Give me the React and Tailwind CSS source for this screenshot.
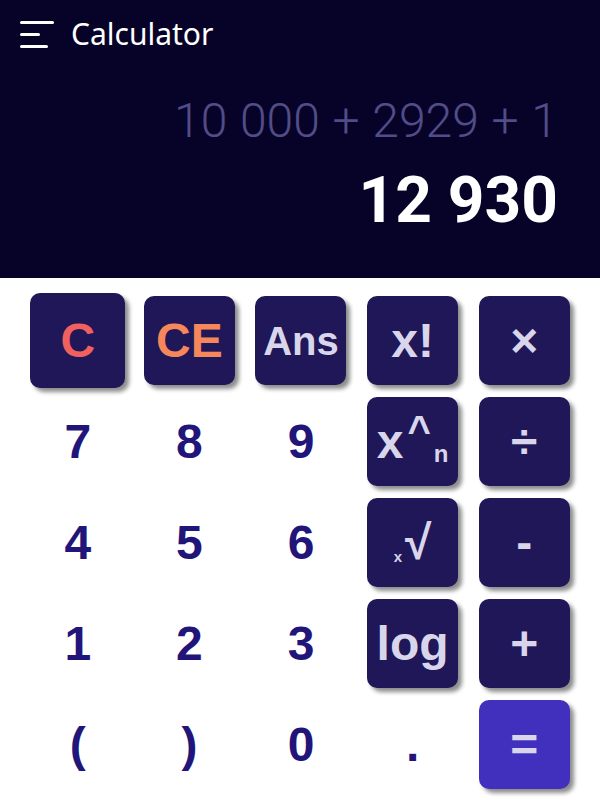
import React from "react";

const KEYS = [
  { label: "C", kind: "fn", text: "text-[#f0605e]", big: true },
  { label: "CE", kind: "fn", text: "text-[#f6875b]" },
  { label: "Ans", kind: "fn", small: true },
  { label: "x!", kind: "fn" },
  { label: "×", kind: "fn" },
  { label: "7" },
  { label: "8" },
  { label: "9" },
  { label: "pow", kind: "fn" },
  { label: "÷", kind: "fn" },
  { label: "4" },
  { label: "5" },
  { label: "6" },
  { label: "root", kind: "fn" },
  { label: "-", kind: "fn" },
  { label: "1" },
  { label: "2" },
  { label: "3" },
  { label: "log", kind: "fn" },
  { label: "+", kind: "fn" },
  { label: "(" },
  { label: ")" },
  { label: "0" },
  { label: "." },
  { label: "=", kind: "eq" },
];

const renderLabel = (label) => {
  if (label === "pow")
    return (
      <span className="flex items-end">
        <span>x</span>
        <span className="relative -top-[16px] ml-[4px] text-[40px]">^</span>
        <span className="text-[24px] ml-[3px]">n</span>
      </span>
    );
  if (label === "root")
    return (
      <span className="flex items-end">
        <span className="text-[15px] mr-[3px] leading-[1.4]">x</span>
        <span>√</span>
      </span>
    );
  return label;
};

const Key = ({ k }) => {
  if (!k.kind) {
    return (
      <div className="flex items-center justify-center text-[#22157a] text-[48px] font-bold leading-none">
        {k.label}
      </div>
    );
  }
  const bg = k.kind === "eq" ? "bg-[#4130bd]" : "bg-[#1f1757]";
  const size = k.big ? "w-[95px] h-[95px]" : "w-[91px] h-[89px]";
  return (
    <div className="flex items-center justify-center">
      <button
        className={`${size} ${bg} rounded-[10px] shadow-[4px_4px_4px_rgba(0,0,0,0.45)] flex items-center justify-center font-bold leading-none ${
          k.small ? "text-[40px]" : "text-[48px]"
        } ${k.text || "text-[#d9d5ea]"}`}
      >
        {renderLabel(k.label)}
      </button>
    </div>
  );
};

export default function App() {
  return (
    <div className="w-[600px] h-[800px] bg-white overflow-hidden">
      <header className="h-[278px] bg-[#070328] flex flex-col">
        <div className="flex items-center h-[40px] mt-[14px] pl-[20px]">
          <div className="flex flex-col gap-[9px]">
            <span className="block w-[34px] h-[3px] rounded-full bg-white" />
            <span className="block w-[20px] h-[3px] rounded-full bg-white" />
            <span className="block w-[28px] h-[3px] rounded-full bg-white" />
          </div>
          <h1 className="ml-[17px] text-white text-[30px] font-['Noto_Sans',sans-serif] leading-none">
            Calculator
          </h1>
        </div>
        <div className="flex flex-col items-end pr-[42px] font-['Roboto',sans-serif]">
          <div className="mt-[43px] text-[48px] font-light text-[#524c88] leading-none [word-spacing:1px]">
            10 000 + 2929 + 1
          </div>
          <div className="mt-[24px] text-[64px] font-bold text-white leading-none">
            12 930
          </div>
        </div>
      </header>
      <main className="grid grid-cols-5 auto-rows-[101px] pl-[22px] pr-[20px] pt-[12px] font-['Liberation_Sans',Arial,sans-serif]">
        {KEYS.map((k, i) => (
          <Key key={i} k={k} />
        ))}
      </main>
    </div>
  );
}
